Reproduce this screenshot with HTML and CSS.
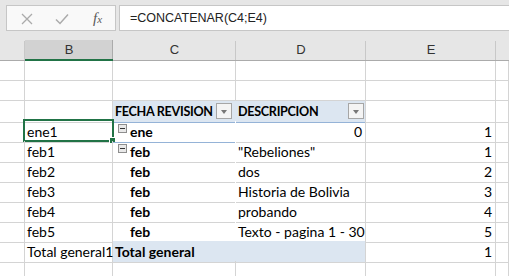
FILE: index.html
```html
<!DOCTYPE html>
<html>
<head>
<meta charset="utf-8">
<link rel="stylesheet" href="styles.css">
</head>
<body>
<div class="app">
  <div class="fbar">
    <div class="btnbox">
      <svg class="ico x" width="12" height="12" viewBox="0 0 12 12"><path d="M1 1 L11 11 M11 1 L1 11" stroke="#ababab" stroke-width="1.3" fill="none"/></svg>
      <svg class="ico ok" width="14" height="12" viewBox="0 0 14 12"><path d="M1 6.5 L5 10.5 L13 1.5" stroke="#ababab" stroke-width="1.5" fill="none"/></svg>
      <span class="fx">f<span class="fxx">x</span></span>
    </div>
    <div class="formula">=CONCATENAR(C4;E4)</div>
  </div>
  <div class="row hdr">
    <div class="h"></div>
    <div class="h sel">B</div>
    <div class="h">C</div>
    <div class="h">D</div>
    <div class="h">E</div>
    <div class="h last"></div>
  </div>
  <div class="row"><div class="c"></div><div class="c"></div><div class="c"></div><div class="c"></div><div class="c"></div><div class="c"></div></div>
  <div class="row"><div class="c"></div><div class="c"></div><div class="c"></div><div class="c"></div><div class="c"></div><div class="c"></div></div>
  <div class="row">
    <div class="c"></div><div class="c"></div>
    <div class="c ph phc"><span class="pht">FECHA REVISION</span><span class="dd"></span></div>
    <div class="c ph phd"><span class="pht">DESCRIPCION</span><span class="dd"></span></div>
    <div class="c"></div><div class="c"></div>
  </div>
  <div class="row">
    <div class="c"></div><div class="c active">ene1<span class="selbox"></span><span class="handle"></span></div>
    <div class="c pc b bl"><span class="tog"></span>ene</div>
    <div class="c pd r">0</div>
    <div class="c r">1</div><div class="c"></div>
  </div>
  <div class="row">
    <div class="c"></div><div class="c">feb1</div>
    <div class="c pc b"><span class="tog"></span>feb</div>
    <div class="c pd">"Rebeliones"</div>
    <div class="c r">1</div><div class="c"></div>
  </div>
  <div class="row">
    <div class="c"></div><div class="c">feb2</div>
    <div class="c pc b ind">feb</div>
    <div class="c pd">dos</div>
    <div class="c r">2</div><div class="c"></div>
  </div>
  <div class="row">
    <div class="c"></div><div class="c">feb3</div>
    <div class="c pc b ind">feb</div>
    <div class="c pd">Historia de Bolivia</div>
    <div class="c r">3</div><div class="c"></div>
  </div>
  <div class="row">
    <div class="c"></div><div class="c">feb4</div>
    <div class="c pc b ind">feb</div>
    <div class="c pd">probando</div>
    <div class="c r">4</div><div class="c"></div>
  </div>
  <div class="row">
    <div class="c"></div><div class="c">feb5</div>
    <div class="c pc b ind bl">feb</div>
    <div class="c pd bl">Texto - pagina 1 - 30</div>
    <div class="c r">5</div><div class="c"></div>
  </div>
  <div class="row">
    <div class="c"></div><div class="c">Total general1</div>
    <div class="c pt phc b">Total general</div>
    <div class="c pt"></div>
    <div class="c r">1</div><div class="c"></div>
  </div>
  <div class="row"><div class="c"></div><div class="c"></div><div class="c"></div><div class="c"></div><div class="c"></div><div class="c"></div></div>
</div>
</body>
</html>
```
FILE: styles.css
```css
html, body {
  margin: 0;
  padding: 0;
  background: #ffffff;
  overflow: hidden;
}
.app {
  width: 509px;
  height: 276px;
  overflow: hidden;
  font-family: Lato, "Liberation Sans", sans-serif;
  font-size: 14px;
  color: #000;
}
.fbar {
  height: 40px;
  background: #e6e6e6;
  display: flex;
  align-items: flex-start;
  padding: 5px 0 0 6px;
  box-sizing: border-box;
  gap: 3px;
}
.btnbox {
  width: 110px;
  height: 26px;
  box-sizing: border-box;
  border: 1px solid #c6c6c6;
  background: #f9f9f9;
  display: flex;
  align-items: center;
  position: relative;
}
.ico { position: absolute; }
.ico.x { left: 14px; top: 7px; }
.ico.ok { left: 48px; top: 7px; }
.fx {
  position: absolute;
  left: 86px;
  top: 4px;
  font-family: "Liberation Serif", serif;
  font-style: italic;
  font-size: 15px;
  color: #5a5a5a;
}
.fxx { font-size: 11px; }
.formula {
  flex: 1;
  height: 26px;
  box-sizing: border-box;
  border: 1px solid #c6c6c6;
  border-right: none;
  background: #fff;
  font-family: "Liberation Sans", sans-serif;
  font-size: 12.5px;
  line-height: 24px;
  padding-left: 10px;
  color: #222;
}
.row {
  display: grid;
  grid-template-columns: 25px 88px 123px 130px 130px 13px;
  height: 20px;
}
.hdr {
  height: 21px;
  background: #e6e6e6;
}
.h {
  box-sizing: border-box;
  border-bottom: 1px solid #ababab;
  text-align: center;
  font-family: "Liberation Sans", sans-serif;
  font-size: 13px;
  line-height: 20px;
  color: #333;
  position: relative;
}
.h::after {
  content: "";
  position: absolute;
  right: 0;
  top: 1px;
  bottom: 0;
  width: 1px;
  background: #c8c8c8;
}
.h.last::after { display: none; }
.h.sel {
  background: #d2d2d2;
  border-bottom: 2px solid #217346;
  line-height: 19px;
}
.h.sel::after { background: #ababab; top: 0; }
.c {
  box-sizing: border-box;
  border-right: 1px solid #d4d4d4;
  border-bottom: 1px solid #d4d4d4;
  padding: 0 3px 0 2px;
  line-height: 21px;
  white-space: nowrap;
  position: relative;
}
.r { text-align: right; }
.b { font-weight: bold; }
.ph {
  background: #dce6f1;
  font-weight: bold;
  border-bottom-color: #95b3d7;
  display: flex;
  justify-content: space-between;
  align-items: flex-start;
}
.pht {
  font-size: 12.6px;
  letter-spacing: -0.3px;
}
.phc { border-right-color: #dce6f1; }
.phd { border-right-color: #d4d4d4; padding-right: 1px; }
.dd {
  flex-shrink: 0;
  width: 16px;
  height: 16px;
  box-sizing: border-box;
  border: 1px solid #a6a6a6;
  background: #f4f4f4;
  margin-top: 2px;
  position: relative;
}
.dd::after {
  content: "";
  position: absolute;
  left: 4px;
  top: 6px;
  border-left: 3.5px solid transparent;
  border-right: 3.5px solid transparent;
  border-top: 4px solid #777;
}
.pc { border-right-color: #fff; padding-left: 5px; display: flex; align-items: flex-start; }
.ind { padding-left: 17px; }
.pd { padding-left: 2px; padding-right: 3px; }
.bl { border-bottom-color: #95b3d7; }
.tog {
  flex-shrink: 0;
  width: 9px;
  height: 9px;
  box-sizing: border-box;
  border: 1px solid #8e8e8e;
  background: #e8e8e8;
  margin: 3px 3px 0 0;
  position: relative;
}
.tog::after {
  content: "";
  position: absolute;
  left: 1px;
  right: 1px;
  top: 3px;
  height: 1px;
  background: #333;
}
.pt { background: #dce6f1; }
.pt.phc { border-right-color: #dce6f1; }
.active { overflow: visible; }
.selbox {
  position: absolute;
  left: -2px;
  top: -2px;
  width: 91px;
  height: 23px;
  box-sizing: border-box;
  border: 2px solid #217346;
  pointer-events: none;
}
.handle {
  position: absolute;
  left: 84px;
  top: 16px;
  width: 7px;
  height: 7px;
  box-sizing: border-box;
  background: #217346;
  border: 1px solid #fff;
}
```
